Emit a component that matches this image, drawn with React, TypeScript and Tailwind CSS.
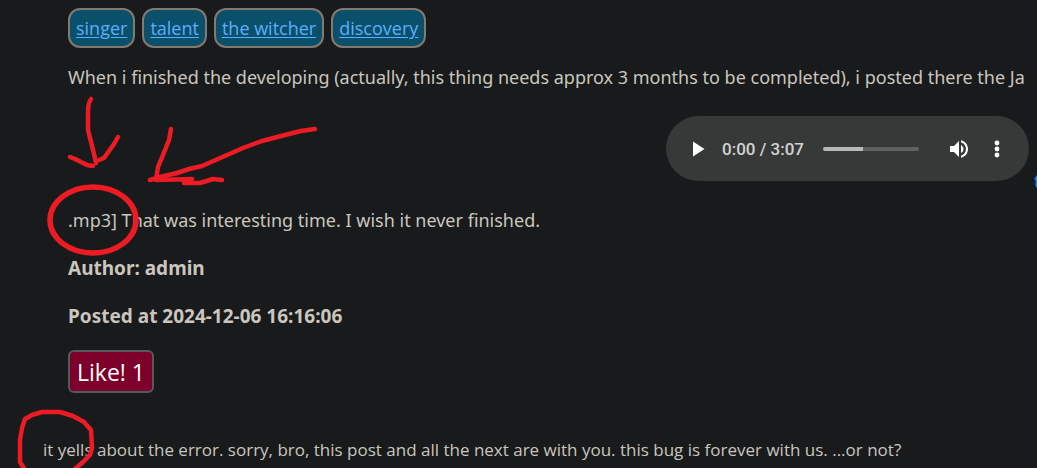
const tags = ["singer", "talent", "the witcher", "discovery"];

function AudioPlayer() {
  return (
    <div className="flex h-[65px] w-[363px] shrink-0 items-center rounded-full bg-[#373938] pl-5 pr-5 font-['Roboto',sans-serif] text-white">
      <button type="button" aria-label="Play" className="flex size-6 items-center justify-center">
        <svg viewBox="0 0 24 24" className="size-6" fill="currentColor">
          <path d="M7 4.5v15L18.5 12z" />
        </svg>
      </button>
      <span className="ml-3 w-[85px] whitespace-nowrap text-[17px] font-medium leading-5 text-[#d2d2d2]">0:00 / 3:07</span>
      <input
        type="range"
        aria-label="Playback position"
        min={0}
        max={187}
        defaultValue={0}
        className="ml-4 h-1 w-24 appearance-none rounded-full bg-[linear-gradient(to_right,#b8b8b8_42%,#5f6160_42%)] [&::-webkit-slider-thumb]:size-0 [&::-webkit-slider-thumb]:appearance-none"
      />
      <button type="button" aria-label="Mute" className="ml-auto flex size-6 items-center justify-center">
        <svg viewBox="0 0 24 24" className="size-6" fill="currentColor">
          <path d="M3 9v6h4l5 5V4L7 9H3zm13.5 3c0-1.77-1.02-3.29-2.5-4.03v8.05c1.48-.73 2.5-2.25 2.5-4.02zM14 3.23v2.06c2.89.86 5 3.54 5 6.71s-2.11 5.85-5 6.71v2.06c4.01-.91 7-4.49 7-8.77s-2.99-7.86-7-8.77z" />
        </svg>
      </button>
      <button type="button" aria-label="More options" className="ml-[14px] flex size-6 items-center justify-center">
        <svg viewBox="0 0 24 24" className="size-6" fill="currentColor">
          <circle cx="12" cy="6" r="2.4" />
          <circle cx="12" cy="12" r="2.4" />
          <circle cx="12" cy="18" r="2.4" />
        </svg>
      </button>
    </div>
  );
}

function PenMarks() {
  return (
    <svg
      aria-hidden="true"
      className="pointer-events-none absolute left-0 top-0 h-[468px] w-[340px]"
      viewBox="0 0 340 468"
      fill="none"
      stroke="#ed1c24"
      strokeWidth="4.5"
      strokeLinecap="round"
      strokeLinejoin="round"
    >
      <path d="M91 99C88 103 88 108 88 117L88 130L91 142L94 154L96 163" />
      <path d="M70 157L75 159L81 162L87 165L93 166M118 137L114 144L109 151L104 158L99 160" />
      <path d="M315 129L301 131L285 135L262 141L243 148L218 159L202 166L189 169L177 173L160 177L150 180" />
      <path d="M171 129L169 140L163 155L158 167L156 180L192 179M184 183H200L213 179L222 180" />
      <ellipse cx="93" cy="220" rx="43" ry="33" strokeWidth="5.5" />
      <path d="M25 470L20 462V440L22 428L25 419L32 415L42 412H60L73 416L84 422L91 430L92 448L90 455L83 462L75 469" />
    </svg>
  );
}

export default function App() {
  return (
    <div className="relative min-h-screen overflow-hidden bg-[#181a1b] font-['Noto_Sans','Open_Sans',sans-serif] text-[18px] leading-6 text-[#cac6bf]">
      <article className="pl-[68px] pt-2">
        <nav aria-label="Tags" className="flex gap-[7px] font-['Open_Sans',sans-serif]">
          {tags.map((tag) => (
            <a
              key={tag}
              href="#"
              className="flex h-10 items-center rounded-xl border-2 border-[#83796c] bg-[#0b506a] px-[6px] text-[18px] text-[#5aaeff] underline underline-offset-2"
            >
              {tag}
            </a>
          ))}
        </nav>
        <p className="mt-[17px] whitespace-nowrap">
          When i finished the developing (actually, this thing needs approx 3 months to be completed), i posted there the Ja
        </p>
        <div className="mt-[27px] flex items-end justify-end gap-[5px]">
          <AudioPlayer />
          <a href="#" className="-mb-3 w-[3px] overflow-hidden text-[#1c93e8]">t</a>
        </div>
        <p className="mt-[27px]">.mp3] That was interesting time. I wish it never finished.</p>
        <p className="mt-6 text-[19px] font-bold leading-6">Author: admin</p>
        <p className="mt-6 text-[19px] font-bold leading-6">Posted at 2024-12-06 16:16:06</p>
        <button type="button" className="mt-[22px] flex h-[43px] items-center rounded-md border-2 border-[#54595b] bg-[#7c0029] px-[7px] font-['Open_Sans',sans-serif] text-[23px] text-white">
          Like! 1
        </button>
      </article>
      <p className="mt-[45px] whitespace-nowrap pl-[43px] font-['Open_Sans',sans-serif] text-[17px]">
        it yells about the error. sorry, bro, this post and all the next are with you. this bug is forever with us. ...or not?
      </p>
      <PenMarks />
    </div>
  );
}
